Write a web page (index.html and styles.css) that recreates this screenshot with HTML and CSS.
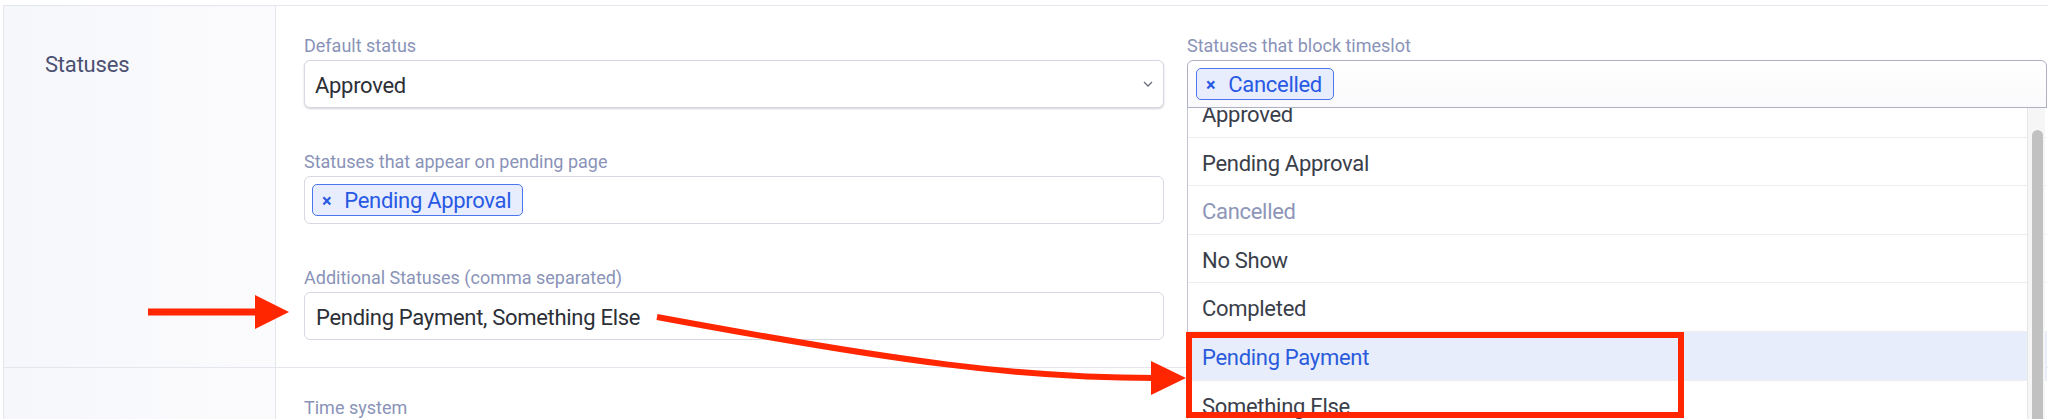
FILE: index.html
```html
<!DOCTYPE html>
<html>
<head>
<meta charset="utf-8">
<link rel="stylesheet" href="styles.css">
</head>
<body>
<div class="settings">
  <div class="row">
    <div class="row-label">Statuses</div>
    <div class="row-body">
      <div class="grid">
        <div class="col">
          <div class="group">
            <label class="lbl">Default status</label>
            <div class="field select">
              <span class="val">Approved</span>
              <svg class="chev" width="10" height="6" viewBox="0 0 10 6"><polyline points="1,1 5,5 9,1" fill="none" stroke="#6b6e78" stroke-width="1.3"/></svg>
            </div>
          </div>
          <div class="group">
            <label class="lbl">Statuses that appear on pending page</label>
            <div class="field tags">
              <span class="tag"><span class="x">×</span>Pending Approval</span>
            </div>
          </div>
          <div class="group">
            <label class="lbl">Additional Statuses (comma separated)</label>
            <div class="field input"><span class="val">Pending Payment, Something Else</span></div>
          </div>
        </div>
        <div class="col">
          <div class="group">
            <label class="lbl">Statuses that block timeslot</label>
            <div class="multi">
              <div class="field tags open">
                <span class="tag"><span class="x">×</span>Cancelled</span>
              </div>
              <div class="dropdown">
                <ul class="list">
                  <li class="item">Approved</li>
                  <li class="item">Pending Approval</li>
                  <li class="item selected">Cancelled</li>
                  <li class="item">No Show</li>
                  <li class="item">Completed</li>
                  <li class="item hover">Pending Payment</li>
                  <li class="item">Something Else</li>
                </ul>
                <div class="track"><div class="thumb"></div></div>
              </div>
            </div>
          </div>
        </div>
      </div>
    </div>
  </div>
  <div class="row">
    <div class="row-label"></div>
    <div class="row-body">
      <div class="group">
        <label class="lbl">Time system</label>
      </div>
    </div>
  </div>
</div>
<svg class="annot" width="2048" height="419" viewBox="0 0 2048 419">
  <line x1="148" y1="312" x2="258" y2="312" stroke="#ff2600" stroke-width="7"/>
  <polygon points="255,295 289,312 255,329" fill="#ff2600"/>
  <path d="M657,317 C900,362 1020,378 1155,378" fill="none" stroke="#ff2600" stroke-width="6"/>
  <polygon points="1151,361 1186,378 1151,395" fill="#ff2600"/>
  <rect x="1189" y="335" width="492" height="80" fill="none" stroke="#ff2600" stroke-width="6"/>
</svg>
</body>
</html>
```

FILE: styles.css
```css
html, body {
  margin: 0;
  padding: 0;
  background: #ffffff;
  overflow: hidden;
  width: 2048px;
  height: 419px;
  font-family: Roboto, "Liberation Sans", sans-serif;
}
.settings {
  margin: 5px 0 0 3px;
  border-top: 1px solid #e4e6ee;
  border-left: 1px solid #e4e6ee;
}
.row {
  display: flex;
  border-bottom: 1px solid #e4e6ee;
}
.row-label {
  width: 272px;
  flex: none;
  box-sizing: border-box;
  padding: 46px 0 0 41px;
  font-size: 22px;
  line-height: 26px;
  letter-spacing: -0.2px;
  color: #4b5072;
  background: linear-gradient(to right, #f6f7fb, #fbfbfd);
  border-right: 1px solid #e4e6ee;
}
.row-body {
  flex: 1;
  padding: 29px 0 27px 28px;
  min-width: 0;
}
.grid {
  display: grid;
  grid-template-columns: 860px 860px;
  column-gap: 23px;
}
.group {
  margin-bottom: 43px;
}
.col .group:last-child {
  margin-bottom: 0;
}
.lbl {
  display: block;
  font-size: 18px;
  line-height: 22px;
  color: #8a93b8;
  margin-bottom: 3px;
}
.field {
  box-sizing: border-box;
  height: 48px;
  border: 1px solid #d7d9e2;
  border-radius: 6px;
  background: #fff;
  display: flex;
  align-items: center;
  font-size: 22px;
  letter-spacing: -0.3px;
  color: #2c2f36;
}
.field .val {
  padding-top: 2px;
}
.select {
  padding: 0 10px;
  justify-content: space-between;
  box-shadow: 0 1px 2px rgba(40, 44, 70, 0.22);
}
.input {
  padding: 0 11px;
}
.tags {
  padding: 0 7px;
}
.tag {
  box-sizing: border-box;
  height: 32px;
  display: inline-flex;
  align-items: center;
  padding: 0 11px 0 9px;
  border: 1px solid #4b76ee;
  border-radius: 5px;
  background: #e7edfd;
  color: #2859e4;
  font-size: 22px;
}
.tag .x {
  font-size: 18px;
  font-weight: 700;
  margin-right: 13px;
}
.multi {
  position: relative;
}
.tags.open {
  border-color: #aeb0c6;
  border-radius: 6px 6px 0 0;
  padding: 0 8px;
  background: linear-gradient(#ffffff, #fafafc);
}
.dropdown {
  position: absolute;
  top: 47px;
  left: 0;
  right: 0;
  height: 330px;
  overflow: hidden;
  background: #fff;
  border-left: 1px solid #c3c5d5;
  border-top: 1px solid #aeb0c6;
}
.list {
  list-style: none;
  margin: -19px 0 0 0;
  padding: 0;
}
.item {
  height: 43.6px;
  line-height: 43.6px;
  padding: 4px 0 0 14px;
  border-bottom: 1px solid #ececf1;
  font-size: 22px;
  letter-spacing: -0.3px;
  color: #3a3e4a;
}
.item.selected {
  color: #8d96b8;
}
.item.hover {
  background: #e8edfb;
  color: #2a5bdc;
}
.track {
  position: absolute;
  top: 0;
  right: 2px;
  bottom: 0;
  width: 17px;
  background: #f6f6f6;
  border-left: 1px solid #e6e6e6;
}
.thumb {
  position: absolute;
  top: 22px;
  left: 4px;
  width: 11px;
  height: 400px;
  border-radius: 6px;
  background: #c1c1c1;
}
.annot {
  position: absolute;
  top: 0;
  left: 0;
  pointer-events: none;
}
```
